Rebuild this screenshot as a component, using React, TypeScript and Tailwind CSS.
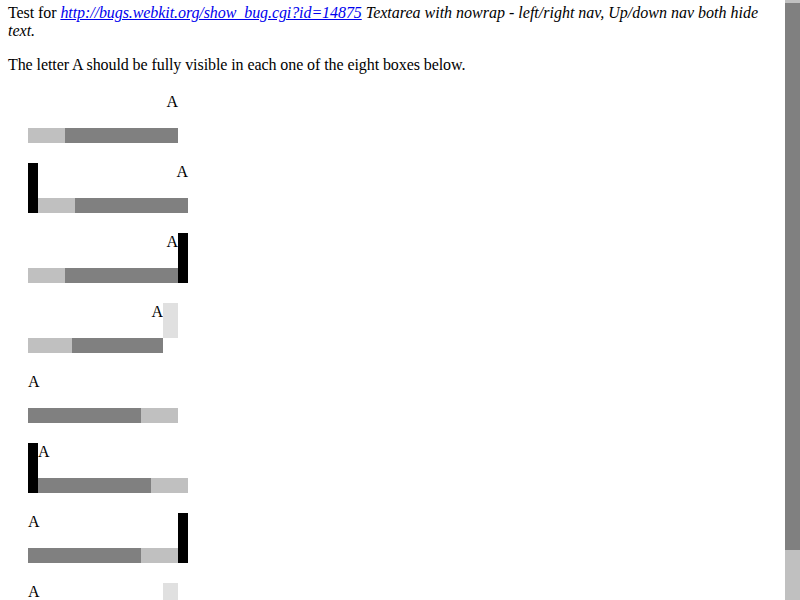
const serif = { fontFamily: '"Liberation Serif", "Times New Roman", serif' };

type Box = {
  border?: "left" | "right";
  vbar?: boolean;
  align: "left" | "right";
};

const boxes: Box[] = [
  { align: "right" },
  { align: "right", border: "left" },
  { align: "right", border: "right" },
  { align: "right", vbar: true },
  { align: "left" },
  { align: "left", border: "left" },
  { align: "left", border: "right" },
  { align: "left", vbar: true },
];

function HScroll({ thumbRight, narrow }: { thumbRight: boolean; narrow?: boolean }) {
  // thumbRight: scrolled to the right end, so the thumb sits on the right
  const light = narrow ? "w-[44px]" : "w-[37px]";
  return (
    <div className="flex h-[15px] w-full">
      {thumbRight ? (
        <>
          <div className={`${light} shrink-0 bg-[#c0c0c0]`} />
          <div className="flex-1 bg-[#808080]" />
        </>
      ) : (
        <>
          <div className="flex-1 bg-[#808080]" />
          <div className={`${light} shrink-0 bg-[#c0c0c0]`} />
        </>
      )}
    </div>
  );
}

function TextBox({ box }: { box: Box }) {
  const right = box.align === "right";
  return (
    <div className="flex h-[50px]">
      {box.border === "left" && <div className="w-[10px] shrink-0 bg-black" />}
      {box.vbar ? (
        <div className="flex w-[150px] flex-col">
          <div className="flex h-[35px]">
            <div className={`w-[135px] leading-[18px] ${right ? "text-right" : "text-left"}`}>A</div>
            <div className="w-[15px] bg-[#e0e0e0]" />
          </div>
          <div className="flex">
            <div className="w-[135px]">
              <HScroll thumbRight={right} narrow />
            </div>
          </div>
        </div>
      ) : (
        <div className="flex w-[150px] flex-col">
          <div className={`h-[35px] leading-[18px] ${right ? "text-right" : "text-left"}`}>A</div>
          <HScroll thumbRight={right} />
        </div>
      )}
      {box.border === "right" && <div className="w-[10px] shrink-0 bg-black" />}
    </div>
  );
}

export default function App() {
  return (
    <div className="flex h-[600px] w-[800px] overflow-hidden bg-white text-[16px] text-black" style={serif}>
      <main className="flex-1 px-[8px] pt-[4px]">
        <p className="leading-[18px]">
          <span className="tracking-[-0.08px]">Test for </span>
          <a href="#" className="italic tracking-[-0.08px] text-[#0000ee] underline">
            http://bugs.webkit.org/show_bug.cgi?id=14875
          </a>{" "}
          <i>Textarea with nowrap - left/right nav, Up/down nav both hide text.</i>
        </p>
        <p className="mt-[16px] leading-[18px] tracking-[-0.08px]">
          The letter A should be fully visible in each one of the eight boxes below.
        </p>
        <div className="mt-[19px] flex flex-col gap-[20px] pl-[20px]">
          {boxes.map((b, i) => (
            <TextBox key={i} box={b} />
          ))}
        </div>
      </main>
      <div className="flex w-[15px] shrink-0 flex-col bg-[#c0c0c0]">
        <div className="h-[3px]" />
        <div className="h-[547px] bg-[#808080]" />
      </div>
    </div>
  );
}
